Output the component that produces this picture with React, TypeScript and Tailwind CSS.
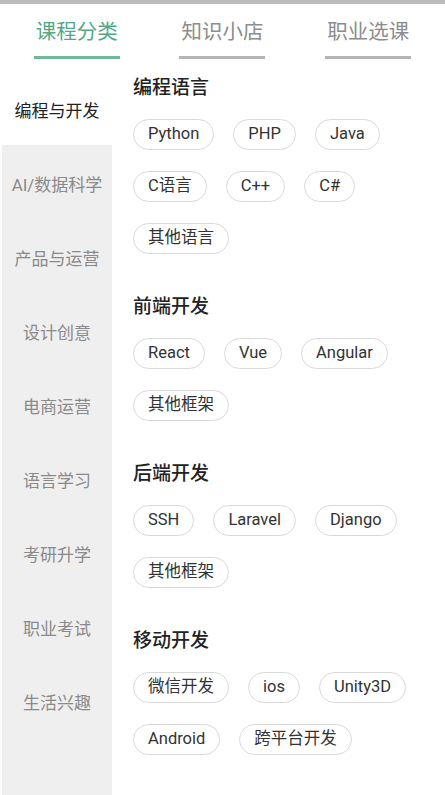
import React from "react";

const tabs = ["课程分类", "知识小店", "职业选课"];
const sideItems = [
  "编程与开发",
  "AI/数据科学",
  "产品与运营",
  "设计创意",
  "电商运营",
  "语言学习",
  "考研升学",
  "职业考试",
  "生活兴趣",
];
const sections: { title: string; rows: string[][] }[] = [
  { title: "编程语言", rows: [["Python", "PHP", "Java"], ["C语言", "C++", "C#"], ["其他语言"]] },
  { title: "前端开发", rows: [["React", "Vue", "Angular"], ["其他框架"]] },
  { title: "后端开发", rows: [["SSH", "Laravel", "Django"], ["其他框架"]] },
  { title: "移动开发", rows: [["微信开发", "ios", "Unity3D"], ["Android", "跨平台开发"]] },
];

const font = { fontFamily: 'Roboto, "Noto Sans CJK SC", sans-serif' };

export default function App() {
  return (
    <div className="flex h-[795px] w-[445px] flex-col overflow-hidden bg-white" style={font}>
      <div className="h-[4px] w-full bg-[#bcbcbc]" />
      <div className="grid grid-cols-3 px-[4px] pb-[12px]">
        {tabs.map((t, i) => (
          <div key={t} className="flex flex-col items-center pt-[14px]">
            <span
              className={
                "text-[20.5px] leading-[28px] " + (i === 0 ? "text-[#52a886]" : "text-[#8c8c8c]")
              }
            >
              {t}
            </span>
            <div
              className={
                "mt-[10px] h-[3px] w-[86px] " + (i === 0 ? "bg-[#6cbb98]" : "bg-[#b4b4b4]")
              }
            />
          </div>
        ))}
      </div>
      <div className="flex flex-1">
        <div className="ml-[2px] flex w-[110px] flex-col bg-[#efefef]">
          {sideItems.map((s, i) => (
            <div
              key={s}
              className={
                "flex h-[74px] items-center justify-center pt-[8px] text-[17px] " +
                (i === 0 ? "bg-white text-[#222222]" : "text-[#8a8a8a]")
              }
            >
              {s}
            </div>
          ))}
        </div>
        <div className="flex flex-1 flex-col gap-[40px] pl-[21px] pt-[4px]">
          {sections.map((sec) => (
            <div key={sec.title} className="flex flex-col">
              <div className="text-[19px] font-medium leading-[26px] text-[#222222]">{sec.title}</div>
              <div className="mt-[18px] flex flex-col gap-[21px]">
                {sec.rows.map((row, ri) => (
                  <div key={ri} className="flex gap-[19px]">
                    {row.map((c) => (
                      <div
                        key={c}
                        className="flex h-[31px] items-center rounded-full border border-[#d9d9d9] px-[14px] text-[16.5px] text-[#333333]"
                      >
                        {c}
                      </div>
                    ))}
                  </div>
                ))}
              </div>
            </div>
          ))}
        </div>
      </div>
    </div>
  );
}
